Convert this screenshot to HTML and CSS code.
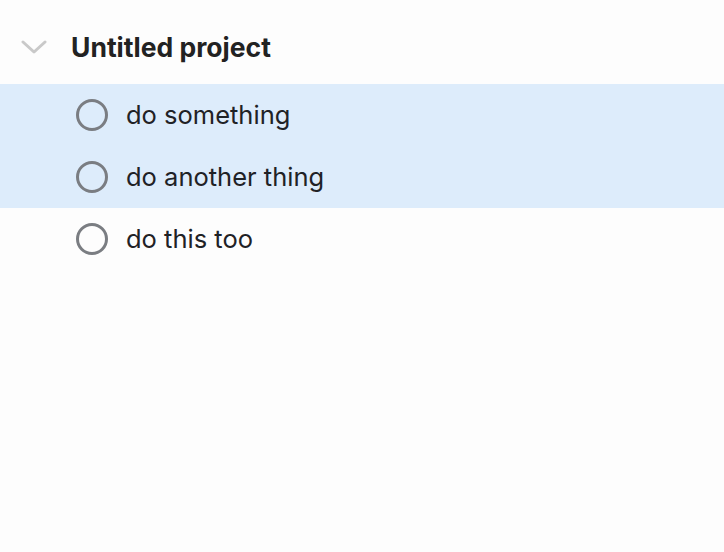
FILE: index.html
```html
<!DOCTYPE html>
<html>
<head>
<meta charset="utf-8">
<link rel="stylesheet" href="styles.css">
</head>
<body>
<div class="project">
  <div class="project-header">
    <svg class="chevron" width="26" height="14" viewBox="0 0 26 14"><path d="M2 2 L13 12 L24 2" fill="none" stroke="#c9c9c9" stroke-width="3" stroke-linecap="round" stroke-linejoin="round"/></svg>
    <span class="project-title">Untitled project</span>
  </div>
  <div class="task selected"><span class="check"></span><span class="task-label">do something</span></div>
  <div class="task selected"><span class="check"></span><span class="task-label">do another thing</span></div>
  <div class="task"><span class="check"></span><span class="task-label">do this too</span></div>
</div>
</body>
</html>
```
FILE: styles.css
```css
html, body {
  margin: 0;
  padding: 0;
  background: #fdfdfd;
  font-family: Inter, "Noto Sans", sans-serif;
  color: #1f2226;
}
.project-header {
  height: 84px;
  display: flex;
  align-items: center;
  padding-left: 21px;
  box-sizing: border-box;
  padding-top: 10px;
}
.chevron {
  display: block;
  margin-right: 24px;
}
.project-title {
  font-size: 26.5px;
  font-weight: 700;
  color: #222;
}
.task {
  height: 62px;
  display: flex;
  align-items: center;
  padding-left: 76px;
}
.task.selected {
  background: #ddecfb;
}
.check {
  width: 26px;
  height: 26px;
  border: 3.5px solid #7a7d82;
  border-radius: 50%;
  margin-right: 18px;
  margin-bottom: 1px;
  flex: none;
}
.task-label {
  font-size: 25.5px;
  font-weight: 420;
  margin-bottom: 2px;
}
```
